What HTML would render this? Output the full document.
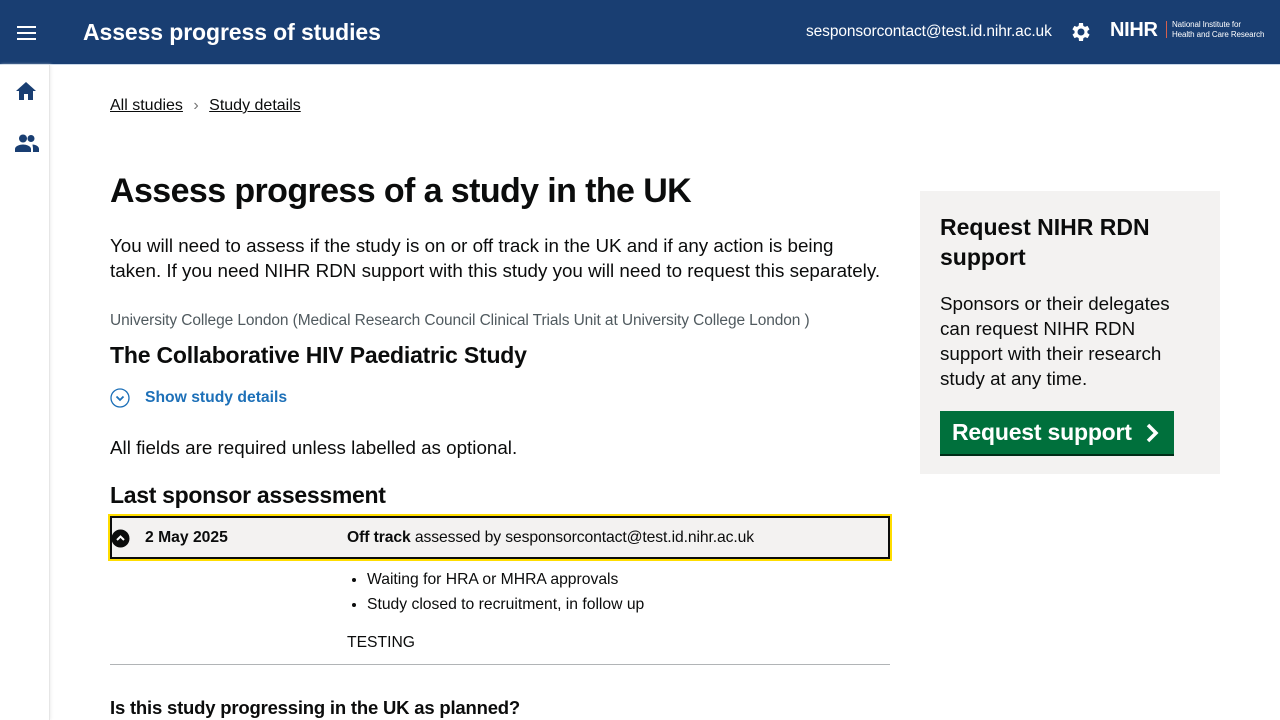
<!DOCTYPE html>
<html><head><meta charset="utf-8"><style>
*{box-sizing:border-box;margin:0;padding:0}
body{width:1280px;height:720px;overflow:hidden;font-family:"Liberation Sans",Arial,sans-serif;color:#0b0c0c;background:#fff;position:relative}
.hdr{position:absolute;left:0;top:0;width:1280px;height:65px;background:#193e72;color:#fff;border-bottom:1px solid #c7d6e8}
.hdr .t{position:absolute;left:83px;top:19px;font-size:23px;font-weight:bold;letter-spacing:-0.1px}
.hdr .em{position:absolute;left:806px;top:23px;font-size:15.5px;letter-spacing:-0.1px}
.side{position:absolute;left:0;top:65px;width:50px;height:655px;border-right:1px solid #e6e6e6;box-shadow:1px 0 3px #eee}
.abs{position:absolute;white-space:nowrap}
a{color:#0b0c0c}
</style></head><body>
<div class="hdr">
<svg class="abs" style="left:17px;top:26px" width="20" height="14"><rect y="0" width="19" height="2" fill="#fff"/><rect y="6" width="19" height="2" fill="#fff"/><rect y="12" width="19" height="2" fill="#fff"/></svg>
<div class="t">Assess progress of studies</div>
<div class="em">sesponsorcontact@test.id.nihr.ac.uk</div>
<svg class="abs" style="left:1069px;top:20px" width="24" height="24" viewBox="0 0 24 24"><path fill="#fff" d="M19.4 13a7.5 7.5 0 000-2l2.1-1.6-2-3.5-2.5 1a7 7 0 00-1.7-1L15 3h-4l-.4 2.9a7 7 0 00-1.7 1l-2.5-1-2 3.5L6.6 11a7.5 7.5 0 000 2l-2.1 1.6 2 3.5 2.5-1a7 7 0 001.7 1L11 21h4l.4-2.9a7 7 0 001.7-1l2.5 1 2-3.5zM13 15.5a3.5 3.5 0 110-7 3.5 3.5 0 010 7z" transform="translate(-1 0)"/></svg>
<div class="abs" style="left:1110px;top:19px;font-size:20px;font-weight:bold;letter-spacing:-0.3px">NIHR</div>
<div class="abs" style="left:1166px;top:21px;width:1px;height:17px;background:#d3604f"></div>
<div class="abs" style="left:1172px;top:20px;font-size:8px;line-height:10px;letter-spacing:-0.1px">National Institute for<br>Health and Care Research</div>
</div>
<div class="side">
<svg class="abs" style="left:16px;top:17px" width="20" height="18" viewBox="0 0 20 18"><path fill="#193e72" d="M10 0L0 9h3v9h5v-6h4v6h5V9h3z"/></svg>
<svg class="abs" style="left:15px;top:69px" width="24" height="18" viewBox="0 0 24 18"><circle cx="8" cy="4.5" r="4" fill="#193e72"/><circle cx="16" cy="4.5" r="3.5" fill="#193e72"/><path fill="#193e72" d="M0 18v-3c0-3 5-4.5 8-4.5s8 1.5 8 4.5v3zM17.5 10.5c3 .3 6.5 1.5 6.5 4.5v3h-6v-3c0-2-.5-3.3-.5-4.5z"/></svg>
</div>
<div class="abs" style="left:110px;top:97px;font-size:16px"><a href="#">All studies</a> <span style="color:#777;margin:0 6px">›</span> <a href="#">Study details</a></div>
<div class="abs" style="left:110px;top:172px;font-size:34px;font-weight:bold;letter-spacing:-0.6px">Assess progress of a study in the UK</div>
<div class="abs" style="left:110px;top:233px;width:775px;font-size:18.8px;line-height:25px;white-space:normal">You will need to assess if the study is on or off track in the UK and if any action is being taken. If you need NIHR RDN support with this study you will need to request this separately.</div>
<div class="abs" style="left:110px;top:312px;font-size:15.5px;color:#505a5f;letter-spacing:-0.1px">University College London (Medical Research Council Clinical Trials Unit at University College London )</div>
<div class="abs" style="left:110px;top:342px;font-size:23px;font-weight:bold;letter-spacing:-0.2px">The Collaborative HIV Paediatric Study</div>
<svg class="abs" style="left:110px;top:388px" width="20" height="20"><circle cx="10" cy="10" r="9" fill="none" stroke="#1d70b8" stroke-width="1.3"/><path d="M6.5 8.5L10 12l3.5-3.5" fill="none" stroke="#1d70b8" stroke-width="1.8"/></svg>
<div class="abs" style="left:145px;top:389px;font-size:15.7px;font-weight:bold;color:#1d70b8">Show study details</div>
<div class="abs" style="left:110px;top:437px;font-size:18.8px">All fields are required unless labelled as optional.</div>
<div class="abs" style="left:110px;top:482px;font-size:23px;font-weight:bold;letter-spacing:-0.3px">Last sponsor assessment</div>
<div class="abs" style="left:108px;top:514px;width:784px;height:47px;background:#ffdd00;padding:2px"><div style="width:100%;height:100%;background:#f3f2f1;border:2px solid #0b0c0c;position:relative">
<svg class="abs" style="left:-1px;top:11px" width="19" height="19"><circle cx="9.5" cy="9.5" r="9" fill="#0b0c0c"/><path d="M6 11l3.5-3.5L13 11" fill="none" stroke="#fff" stroke-width="2"/></svg>
<div class="abs" style="left:33px;top:11px;font-size:15.7px;font-weight:bold">2 May 2025</div>
<div class="abs" style="left:235px;top:11px;font-size:15.7px;letter-spacing:-0.1px"><b>Off track</b> assessed by sesponsorcontact@test.id.nihr.ac.uk</div>
</div></div>
<ul class="abs" style="left:367px;top:567px;font-size:15.7px;line-height:25px;padding-left:0"><li>Waiting for HRA or MHRA approvals</li><li>Study closed to recruitment, in follow up</li></ul>
<div class="abs" style="left:347px;top:634px;font-size:15.7px">TESTING</div>
<div class="abs" style="left:110px;top:664px;width:780px;height:1px;background:#b1b4b6"></div>
<div class="abs" style="left:110px;top:697px;font-size:18.5px;font-weight:bold;letter-spacing:-0.2px">Is this study progressing in the UK as planned?</div>
<div class="abs" style="left:920px;top:191px;width:300px;height:283px;background:#f3f2f1">
<div class="abs" style="left:20px;top:21px;font-size:23px;font-weight:bold;line-height:30px;width:260px;white-space:normal">Request NIHR RDN support</div>
<div class="abs" style="left:20px;top:100px;font-size:18.8px;line-height:25px;width:250px;white-space:normal">Sponsors or their delegates can request NIHR RDN support with their research study at any time.</div>
<div class="abs" style="left:20px;top:220px;width:234px;height:43px;background:#00703c;box-shadow:0 2px 0 #002d18;color:#fff;font-size:23px;font-weight:bold;padding:8px 12px;letter-spacing:-0.2px">Request support
<svg style="position:absolute;left:205px;top:12px" width="14" height="20" viewBox="0 0 14 20"><path d="M3 2l8 8-8 8" fill="none" stroke="#fff" stroke-width="3.5"/></svg></div>
</div>
</body></html>
